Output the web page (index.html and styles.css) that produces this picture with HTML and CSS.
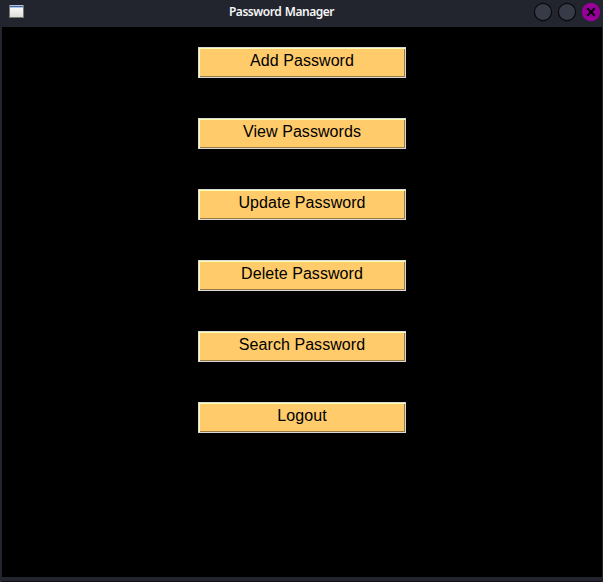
FILE: index.html
```html
<!DOCTYPE html>
<html lang="en">
<head>
<meta charset="utf-8">
<title>Password Manager</title>
<link rel="stylesheet" href="styles.css">
</head>
<body>
<div class="window">
  <header class="titlebar">
    <svg class="app-icon" width="16" height="14" viewBox="0 0 16 14">
      <defs><linearGradient id="paper" x1="0" y1="0" x2="0" y2="1"><stop offset="0" stop-color="#fff"/><stop offset="1" stop-color="#dcddd6"/></linearGradient></defs>
      <rect x="0.5" y="0.5" width="14" height="12" fill="url(#paper)" stroke="#777875"/>
      <rect x="1" y="0" width="13" height="3" fill="#b5c5df"/>
      <rect x="1" y="1" width="13" height="1" fill="#456ca5"/>
    </svg>
    <h1 class="title">Password Manager</h1>
    <div class="controls">
      <svg width="20" height="20" viewBox="0 0 20 20"><circle cx="10" cy="10" r="8.6" fill="#373a47" stroke="#08090c" stroke-width="1.2"/></svg>
      <svg width="20" height="20" viewBox="0 0 20 20"><circle cx="10" cy="10" r="8.6" fill="#373a47" stroke="#08090c" stroke-width="1.2"/></svg>
      <svg width="20" height="20" viewBox="0 0 20 20"><circle cx="10" cy="10" r="9.2" fill="#990099"/><path d="M6.2 6.2l7.6 7.6M13.8 6.2l-7.6 7.6" stroke="#08000a" stroke-width="2.3"/></svg>
    </div>
  </header>
  <main class="content">
    <button class="action">Add Password</button>
    <button class="action">View Passwords</button>
    <button class="action">Update Password</button>
    <button class="action">Delete Password</button>
    <button class="action">Search Password</button>
    <button class="action">Logout</button>
  </main>
  <footer class="frame-edge"></footer>
</div>
</body>
</html>
```
FILE: styles.css
```css
* { box-sizing: border-box; }
body { margin: 0; background: #23252e; overflow: hidden; }
.window {
  display: flex;
  flex-direction: column;
  height: 582px;
  border: solid #23252e;
  border-width: 0 1px 0 2px;
}
.titlebar {
  display: grid;
  grid-template-columns: 71px 1fr 69px;
  align-items: center;
  height: 27px;
  padding: 0 0 3px 7px;
  background: #23252e;
}
.title {
  margin: 0;
  padding-right: 50px;
  text-align: center;
  font: 600 12px/24px "Noto Sans", sans-serif;
  letter-spacing: -0.48px;
  word-spacing: 1px;
  color: #f5f5f6;
  white-space: nowrap;
}
.controls { display: flex; gap: 4px; }
.content {
  flex: 1;
  display: flex;
  flex-direction: column;
  align-items: center;
  gap: 40px;
  padding-top: 20px;
  background: #000;
}
.frame-edge {
  height: 5px;
  background: #23252e;
  border-bottom: 1px solid #150d1a;
}
.action {
  width: 208px;
  height: 31px;
  padding: 0 0 3px;
  border: 1px solid #d9d9d9;
  border-radius: 0;
  background: #ffcb6b;
  box-shadow: inset 1px 1px #ffffb0, inset -1px -1px #99793f;
  color: #000;
  font: 16px/20px "Liberation Sans", Arial, sans-serif;
  letter-spacing: 0.06px;
}
```
